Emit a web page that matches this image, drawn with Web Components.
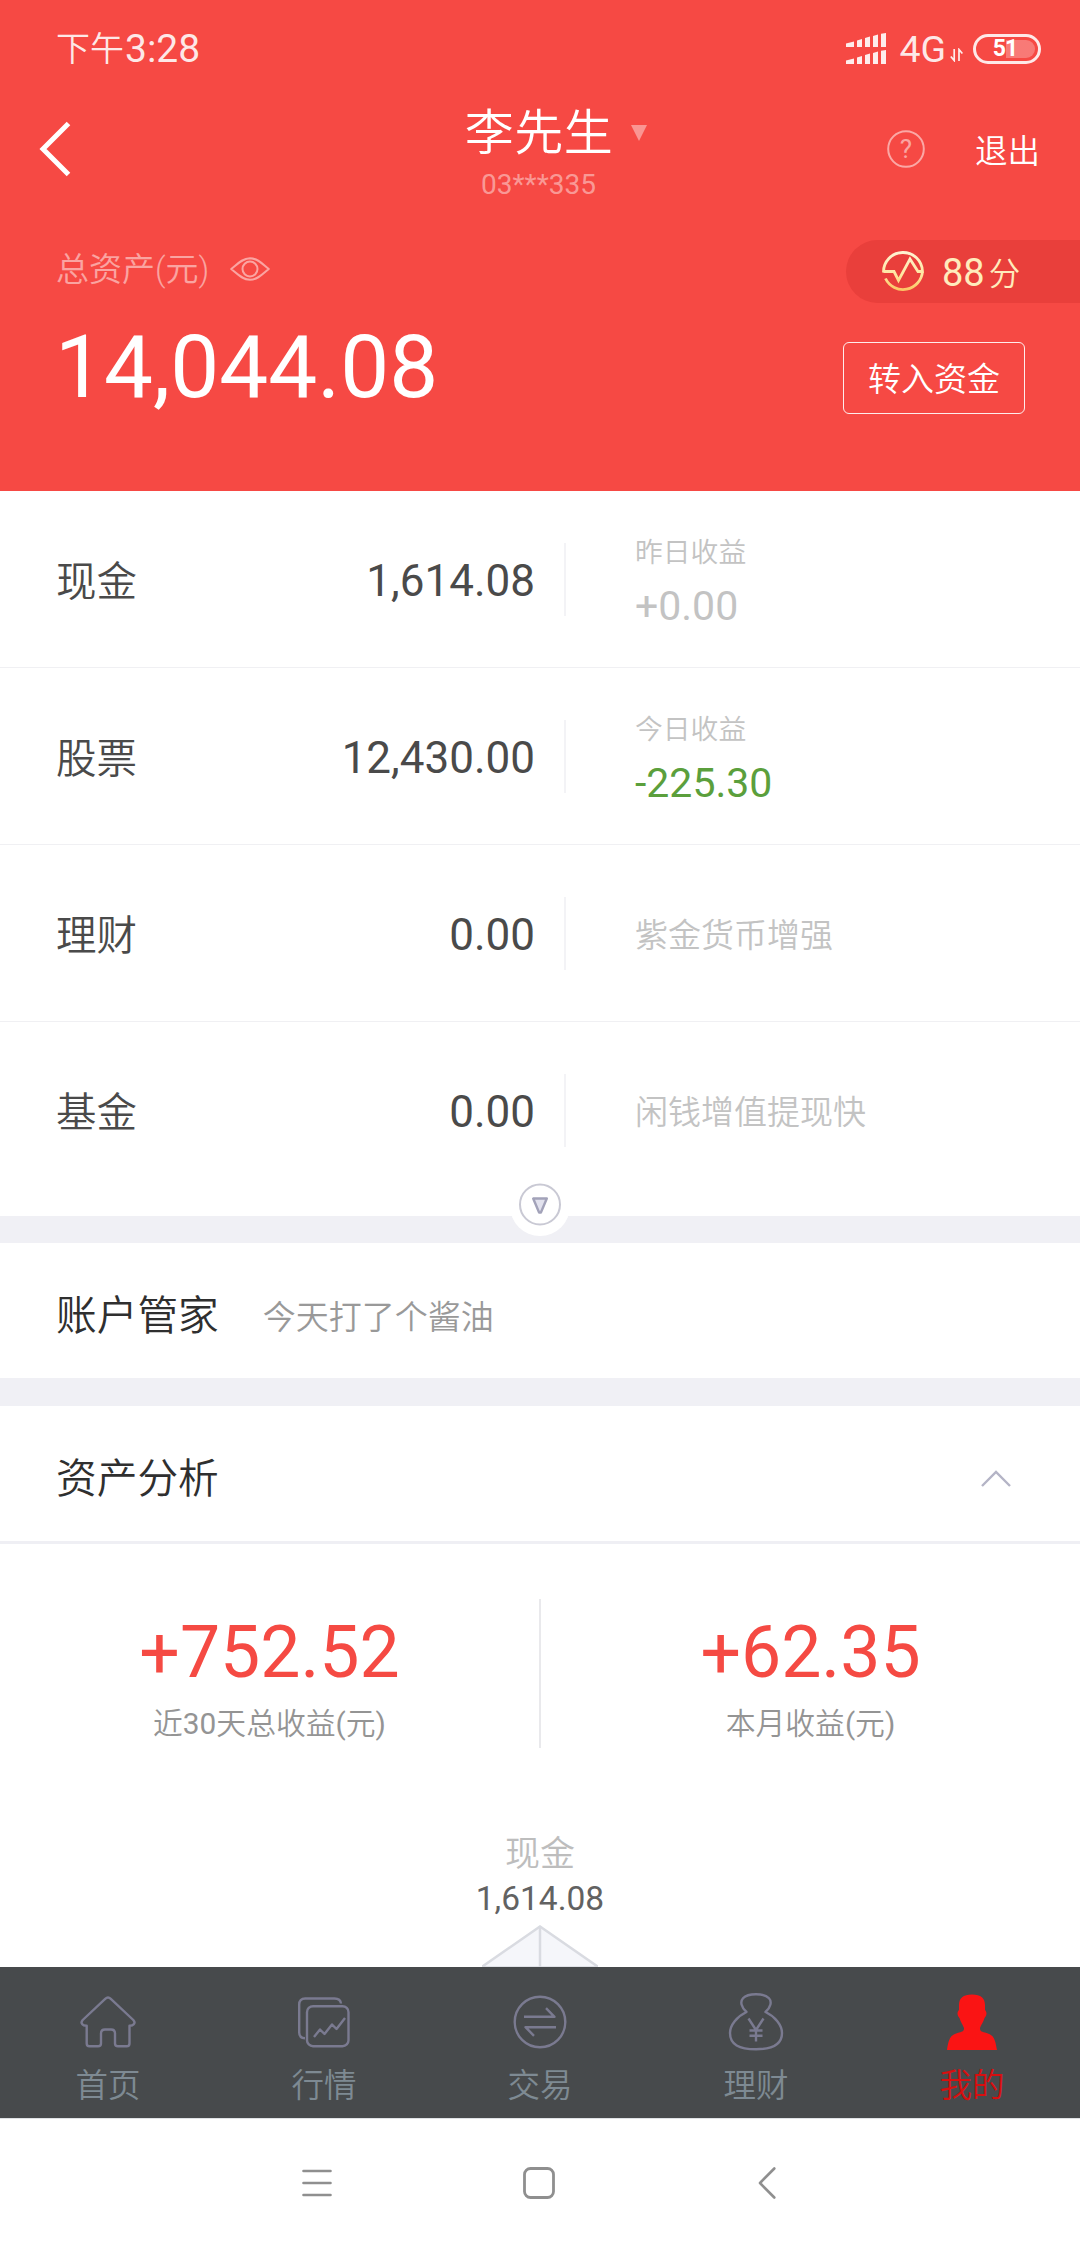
<!DOCTYPE html>
<html lang="zh-CN">
<head>
<meta charset="utf-8">
<title>我的资产</title>
<style>
html,body{margin:0;padding:0;background:#fff}
body{width:1080px;height:2248px;overflow:hidden;font-family:Roboto,"Noto Sans CJK SC",sans-serif;color:#4a4a4a}
</style>
</head>
<body>
<account-page></account-page>
<script>
const define = (name, markup) => {
  const t = document.createElement('template');
  t.innerHTML = markup;
  customElements.define(name, class extends HTMLElement {
    constructor() {
      super();
      this.attachShadow({mode: 'open'}).appendChild(t.content.cloneNode(true));
    }
  });
};

/* Line icons, drawn at their natural pixel size */
const ICONS = {
  signal: [40, 32, `<g fill="#fff" fill-opacity=".9"><path d="M0 10.5 8 8.500V14H0zM11 7.500l5-1.500v8h-5zM19 5l5-1.500V14h-5zM27 3l5-1.500V14h-5zM35 .8 40 0v14h-5z"/><path d="M0 27.500 8 25.500V31H0zM11 24.500l5-1.500v8h-5zM19 22l5-1.500V31h-5zM27 20l5-1.500V31h-5zM35 17.800l5-.8v14h-5z"/></g>`],
  data: [13, 14, `<path d="M4.2 1v11.500L.8 8.500M9 13V1.500l3.400 4" fill="none" stroke="#fff" stroke-opacity=".9" stroke-width="1.700"/>`],
  back: [36, 60, `<path d="M31.500 4.500 6 30 31.500 55.500" fill="none" stroke="#fff" stroke-width="5"/>`],
  help: [38, 38, `<circle cx="19" cy="19" r="17.800" fill="none" stroke="#fff" stroke-opacity=".52" stroke-width="2"/>`],
  drop: [16, 16, `<path d="M0 0h16L8 16z" fill="#fff" fill-opacity=".42"/>`],
  eye: [40, 24, `<g fill="none" stroke="#fff" stroke-opacity=".5" stroke-width="2"><path d="M1.200 12C7 7.500 12 1.300 20 1.200 28 1.300 33 7.500 38.800 12 33 16.500 28 22.700 20 22.800 12 22.700 7 16.500 1.200 12z" stroke-linejoin="round"/><circle cx="20" cy="12" r="7.500"/></g>`],
  score: [42, 42, `<defs><linearGradient id="g" x1="0" y1="0" x2="0" y2="1"><stop offset="0" stop-color="#fff2d0"/><stop offset=".6" stop-color="#ffe6a0"/><stop offset="1" stop-color="#fcc765"/></linearGradient></defs><path d="M1.500 23.500A19.500 19.500 0 1 1 40.500 22.500H36L28 10 16.500 31.500 12 22.500H1.500M3.500 29.500A19.500 19.500 0 0 0 40.500 22.500" fill="none" stroke="url(#g)" stroke-width="2.800"/>`],
  expand: [60, 60, `<circle cx="30" cy="30" r="30" fill="#fff" stroke="none"/><circle cx="30" cy="28.500" r="20" fill="none" stroke="#c9c9d4" stroke-width="2"/><path d="M23.200 22.500h13.600L30.900 36.500h-1.800z" fill="#e2e2ee" stroke="#a2a2b9" stroke-width="2.400" stroke-linejoin="round"/>`],
  up: [30, 17, `<path d="M1 16 15 2 29 16" fill="none" stroke="#b4b4c6" stroke-width="2.400"/>`],
  peak: [116, 42, `<path d="M-1 42.500 58 1.500 117 42.500z" fill="#f5f6fa" stroke="#d9dbe1" stroke-width="2.500"/><path d="M58 1v42" stroke="#d9dbe1" stroke-width="2.500"/>`],
  home: [56, 60, `<path d="M25.200 7.800Q28 5.200 30.800 7.800L53.300 29Q55.500 31.500 53.700 33.300 52.500 34.800 49.500 34.700V52.500Q49.500 55.300 46.700 55.300H38Q35 55.300 35 52.500V42.500Q35 38.500 31 38.500H25Q21 38.500 21 42.500V52.500Q21 55.300 18 55.300H9.500Q6.700 55.300 6.700 52.500V34.700Q3.500 34.800 2.300 33.300.600 31.500 2.700 29z"/>`],
  quote: [56, 60, `<path d="M9 47.200Q3.200 47 3.200 41.500V13.500Q3.200 7.500 9.200 7.500H38.500Q44.500 7.500 45 12.500"/><rect x="11" y="15.200" width="41.500" height="40" rx="6"/><path d="M18 46l6-7.500 4.500 4.500 7.500-9.500 4.500 4.500 8.500-11"/>`],
  trade: [56, 60, `<circle cx="28" cy="31" r="25.300"/><path d="M12 25.800H42.500L34 17.200M44 36.200H13.500L22 44.800"/>`],
  bag: [56, 60, `<path d="M18.500 21C13 16 12 10.500 15 7.200 18 4 22 3.200 28 3.200S38 4 41 7.200C44 10.500 43 16 37.500 21 47 25.500 54 34 54 42 54 53.500 45 58.200 28 58.200S2 53.500 2 42C2 34 9 25.500 18.500 21z"/><path d="M20.500 27.500 28 39 35.500 27.500M28 38.500V50.500M21.500 39.500h13M21.500 44.700h13"/>`],
  me: [56, 60, `<path stroke="none" fill="#fa1414" d="M28 3.500c9 0 13 4 13 10.500V19c2.500 2.500 1.500 6-.500 8-1.500 5-3.500 7-4.500 10 0 3 1 3.500 5 4.500 8.500 2.500 10 5 12 17.500H3c2-12.500 3.500-15 12-17.500 4-1 5-1.500 5-4.500-1-3-3-5-4.500-10-2-2-3-5.500-.500-8V14c0-6.500 4-10.500 13-10.500z"/>`],
  menu: [30, 32, `<path d="M1.500 4h27M1.500 16h27M1.500 28h27" stroke="#8f8f8f" stroke-width="2.600" stroke-linecap="round"/>`],
  square: [32, 32, `<rect x="1.500" y="1.500" width="29" height="29" rx="6" fill="none" stroke="#8f8f8f" stroke-width="2.800"/>`],
  navback: [18, 32, `<path d="M16.300 1.500 2 16 16.300 30.500" fill="none" stroke="#8f8f8f" stroke-width="2.600" stroke-linecap="round"/>`]
};
customElements.define('line-icon', class extends HTMLElement {
  constructor() { super(); this.attachShadow({mode: 'open'}); }
  connectedCallback() {
    const name = this.getAttribute('name');
    const [w, h, body] = ICONS[name];
    this.shadowRoot.innerHTML = `<style>:host{display:block;flex:none;width:${w}px;height:${h}px}svg{display:block}</style>
      <svg width="${w}" height="${h}" viewBox="0 0 ${w} ${h}" fill="none" stroke="#7a7a90" stroke-width="2.4" stroke-linejoin="round">${
        ['signal','drop','peak','score','back','up','data'].includes(name) ? `<g stroke="none" stroke-linejoin="miter">${body}</g>` : body}</svg>`;
  }
});

define('status-bar', `<style>
:host{display:flex;align-items:center;height:98px;padding:0 39px 0 56px;box-sizing:border-box;color:rgba(255,255,255,.88)}
.time{display:flex;align-items:center;gap:1px;font-size:39px;line-height:44px}
.time b{font-weight:350;font-size:34px}
.r{margin-left:auto;display:flex;align-items:center}
.net{font-size:37.500px;line-height:44px;margin-left:13px}
line-icon[name=data]{margin:12px 10px 0 4px}
.bat{box-sizing:border-box;width:68px;height:30px;border:3px solid rgba(255,255,255,.88);border-radius:15px;padding:3px;display:flex}
.lvl{flex:1;border-radius:9px;display:flex;align-items:center;justify-content:center;font:700 23px/18px Roboto;letter-spacing:-1px;color:#fff;background:linear-gradient(90deg,transparent 48%,rgba(255,255,255,.27) 48%);padding-right:4px}
</style>
<div class="time"><b>下午</b><span>3:28</span></div>
<div class="r"><line-icon name="signal"></line-icon><span class="net">4G</span><line-icon name="data"></line-icon><div class="bat"><div class="lvl">51</div></div></div>`);

define('title-bar', `<style>
:host{display:grid;grid-template-columns:1fr auto 1fr;height:112px;align-items:start;color:#fff;padding:0 40px 0 37px}
.back{margin-top:21px}
.mid{display:flex;flex-direction:column;align-items:center}
.name{display:flex;align-items:center;gap:18px;padding-left:35px;font-size:49px;font-weight:350;line-height:60px;margin-top:6px}
.name span{letter-spacing:.5px}
.name line-icon{margin-bottom:3px}
.id{font-size:28px;line-height:32px;margin-top:5px;color:rgba(255,255,255,.45)}
.right{display:flex;align-items:center;justify-content:flex-end;gap:50px;height:101px;font-size:32.500px;font-weight:350}
.help{display:grid;place-items:center;font-size:26px;font-weight:400;color:rgba(255,255,255,.52)}
.help>*{grid-area:1/1}
</style>
<line-icon class="back" name="back"></line-icon>
<div class="mid"><div class="name"><span>李先生</span><line-icon name="drop"></line-icon></div><div class="id">03***335</div></div>
<div class="right"><div class="help"><line-icon name="help"></line-icon><span>?</span></div><span>退出</span></div>`);

define('asset-total', `<style>
:host{display:flex;justify-content:space-between;height:281px;padding-left:56px;color:#fff}
.label{display:flex;align-items:center;gap:21px;height:40px;margin-top:37px;font-size:33px;font-weight:350;color:rgba(255,255,255,.5)}
.label line-icon{margin-top:4px}
.sum{font-size:87.200px;line-height:104px;margin:28px 0 0 -1px}
.side{display:flex;flex-direction:column;align-items:flex-start;width:237px}
.pill{box-sizing:border-box;display:flex;align-items:center;margin:30px 0 0 3px;width:234px;height:63px;border-radius:32px 0 0 32px;background:#e93f3b;padding-left:36px;color:#ffebbc;font-size:38px}
.pill b{font-weight:350;font-size:31.500px;margin:-2px 0 0 4px}
.pill span{margin:2px 0 0 18px}
.pill line-icon{margin-top:-4px}
.btn{box-sizing:border-box;width:182px;height:72px;border:1.500px solid rgba(255,255,255,.9);border-radius:6px;margin-top:39px;display:flex;align-items:center;justify-content:center;font-size:33px;font-weight:350;line-height:40px;padding-top:4px}
</style>
<div><div class="label"><span>总资产(元)</span><line-icon name="eye"></line-icon></div><div class="sum">14,044.08</div></div>
<div class="side"><div class="pill"><line-icon name="score"></line-icon><span>88</span><b>分</b></div><div class="btn">转入资金</div></div>`);

define('asset-row', `<style>
:host{display:flex;align-items:center;box-sizing:border-box;height:177px;border-bottom:1.500px solid #f0f0f3;padding-left:56px;color:#4a4a4a}
:host([last]){border-color:transparent;margin-bottom:17px}
.name{font-size:40.500px;font-weight:350;flex:none;width:160px;padding-bottom:2px}
.amount{width:319px;text-align:right;font-size:44px;padding-top:4px}
.rule{width:2px;height:73px;background:#f3f3f6;margin:0 69px 0 29px}
.note{font-size:33px;font-weight:350;color:#c3c3c3}
</style>
<span class="name"><slot name="name"></slot></span><span class="amount"><slot name="amount"></slot></span><i class="rule"></i><div class="note"><slot></slot></div>`);

define('gain-note', `<style>
:host{display:block;color:#c3c3c3}
.cap{font-size:27.800px;line-height:36px;margin-top:6px}
.val{font-size:41px;font-weight:400;line-height:48px;margin-top:11px}
:host([down]) .val{color:#5b9f3c}
</style><div class="cap"><slot name="cap"></slot></div><div class="val"><slot></slot></div>`);

define('section-gap', `<style>:host{display:flex;justify-content:center;height:var(--h,27px);background:#f0f0f5}
::slotted(line-icon){position:relative;top:-40px}</style><slot></slot>`);

define('section-head', `<style>
:host{display:flex;align-items:center;height:135px;padding:4px 69px 0 56px;box-sizing:border-box;color:#2f2f2f;font-size:40.700px;font-weight:350}
.hint{font-size:33px;color:#999;margin:5px 0 0 44px}
.end{margin:5px 0 0 auto}
</style><span><slot></slot></span><span class="hint"><slot name="hint"></slot></span><span class="end"><slot name="end"></slot></span>`);

define('profit-stat', `<style>
:host{flex:1;display:flex;flex-direction:column;align-items:center}
.v{font-size:71.500px;line-height:84px;color:#f54a43;margin-top:12px}
.l{font-size:29.800px;line-height:40px;font-weight:350;color:#949494;margin-top:9px}
::slotted(span){--n:400}
</style><div class="v"><slot></slot></div><div class="l"><slot name="label"></slot></div>`);

define('asset-analysis', `<style>
:host{display:flex;flex-direction:column;height:426px;box-sizing:border-box;border-top:3px solid #efeff4;overflow:hidden}
.stats{display:flex;height:149px;margin-top:55px}
.rule{width:2px;background:#e9e9ec}
b{font-weight:400}
.chart{display:flex;flex-direction:column;align-items:center;margin-top:86px}
.n{font-size:35px;font-weight:350;line-height:42px;color:#bdbdbd}
.a{font-size:33.500px;line-height:40px;color:#626262;margin-top:3px}
line-icon{margin-top:6px}
</style>
<div class="stats"><profit-stat>+752.52<span slot="label">近<b>30</b>天总收益<b>(</b>元<b>)</b></span></profit-stat><i class="rule"></i><profit-stat>+62.35<span slot="label">本月收益<b>(</b>元<b>)</b></span></profit-stat></div>
<div class="chart"><span class="n">现金</span><span class="a">1,614.08</span><line-icon name="peak"></line-icon></div>`);

define('tab-item', `<style>
:host{flex:1;display:flex;flex-direction:column;align-items:center;padding-top:24px;font-size:32.500px;font-weight:350;line-height:40px;color:#7e8a93}
:host([active]){color:#d80f0f}
span{margin-top:15px}
</style><slot name="icon"></slot><span><slot></slot></span>`);

define('tab-bar', `<style>:host{display:flex;height:151px;background:#474a4c}</style>
<tab-item><line-icon slot="icon" name="home"></line-icon>首页</tab-item>
<tab-item><line-icon slot="icon" name="quote"></line-icon>行情</tab-item>
<tab-item><line-icon slot="icon" name="trade"></line-icon>交易</tab-item>
<tab-item><line-icon slot="icon" name="bag"></line-icon>理财</tab-item>
<tab-item active><line-icon slot="icon" name="me"></line-icon>我的</tab-item>`);

define('system-nav', `<style>:host{display:flex;align-items:center;justify-content:space-between;height:130px;box-sizing:border-box;border-top:1px solid #dfe2e5;padding:0 304px 1px 302px;background:#fff}
line-icon[name=square]{margin-left:-12px}</style>
<line-icon name="menu"></line-icon><line-icon name="square"></line-icon><line-icon name="navback"></line-icon>`);

define('account-page', `<style>
:host{display:flex;flex-direction:column;width:1080px;height:2248px;background:#fff}
header{background:#f64944;height:491px}
</style>
<header><status-bar></status-bar><title-bar></title-bar><asset-total></asset-total></header>
<asset-row><span slot="name">现金</span><span slot="amount">1,614.08</span><gain-note><span slot="cap">昨日收益</span>+0.00</gain-note></asset-row>
<asset-row><span slot="name">股票</span><span slot="amount">12,430.00</span><gain-note down><span slot="cap">今日收益</span>-225.30</gain-note></asset-row>
<asset-row><span slot="name">理财</span><span slot="amount">0.00</span>紫金货币增强</asset-row>
<asset-row last><span slot="name">基金</span><span slot="amount">0.00</span>闲钱增值提现快</asset-row>
<section-gap><line-icon name="expand"></line-icon></section-gap>
<section-head>账户管家<span slot="hint">今天打了个酱油</span></section-head>
<section-gap style="--h:28px"></section-gap>
<section-head>资产分析<line-icon slot="end" name="up"></line-icon></section-head>
<asset-analysis></asset-analysis>
<tab-bar></tab-bar>
<system-nav></system-nav>`);
</script>
</body>
</html>
